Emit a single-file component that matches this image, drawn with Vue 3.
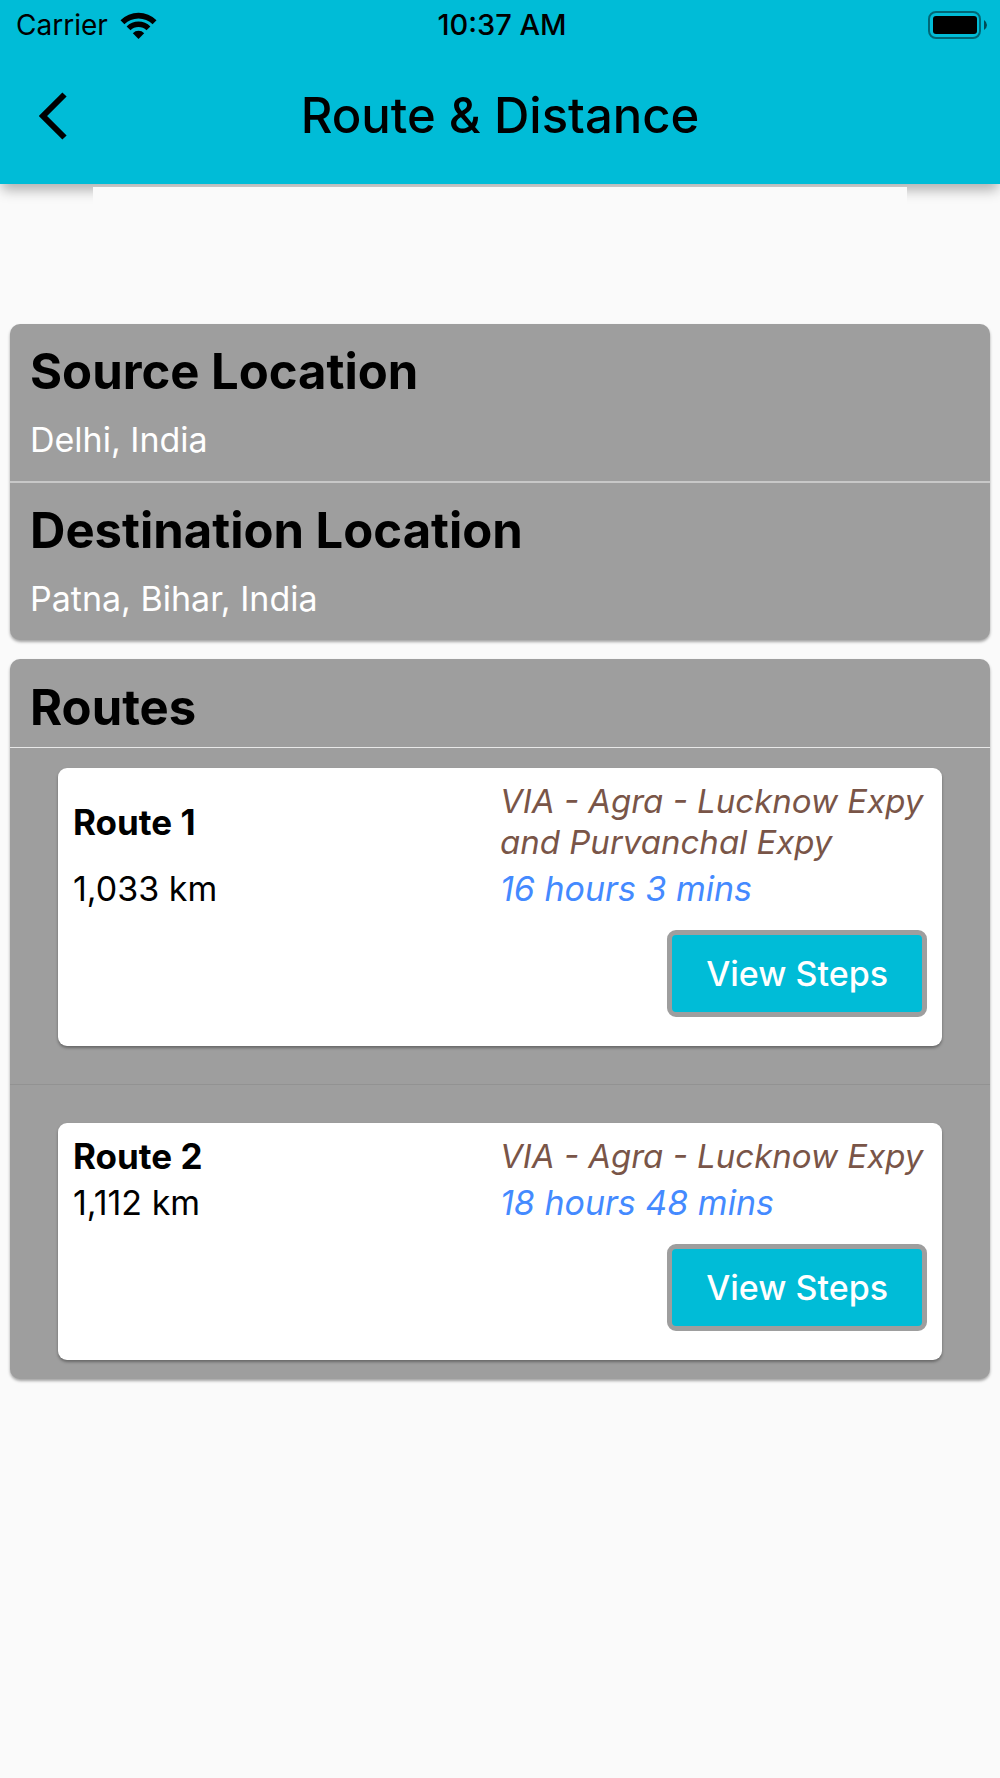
<template>
  <div class="screen">
    <header class="header">
      <div class="status-bar">
        <div class="carrier">
          <span>Carrier</span>
          <svg class="wifi" viewBox="0 0 37 27" aria-hidden="true">
            <path d="M0.5 8.3 A25.5 25.5 0 0 1 36.5 8.3 L32.6 12.2 A20 20 0 0 0 4.4 12.2 Z" />
            <path d="M6.6 14.4 A16.8 16.8 0 0 1 30.4 14.4 L26.5 18.3 A11.3 11.3 0 0 0 10.5 18.3 Z" />
            <path d="M12.8 21.2 A8.1 8.1 0 0 1 24.2 21.2 L18.5 27 Z" />
          </svg>
        </div>
        <span class="time">10:37 AM</span>
        <svg class="battery" viewBox="0 0 60 28" aria-hidden="true">
          <rect x="1" y="1" width="51" height="26" rx="7" fill="none" stroke="#000" stroke-opacity="0.45" stroke-width="2" />
          <rect x="5" y="5" width="44" height="18" rx="3" />
          <path d="M56 9 Q59 11 59 14 Q59 17 56 19 Z" fill-opacity="0.6" />
        </svg>
      </div>
      <div class="app-bar">
        <button class="back" type="button" aria-label="Back">
          <svg viewBox="0 0 28 48" aria-hidden="true">
            <path d="M25.5 2.5 L4 24 L25.5 45.5" fill="none" stroke="#000" stroke-width="6" />
          </svg>
        </button>
        <h1>Route &amp; Distance</h1>
      </div>
    </header>

    <main class="content">
      <div class="placeholder"></div>

      <section class="card">
        <div v-for="place in places" :key="place.label" class="place">
          <h2>{{ place.label }}</h2>
          <p>{{ place.name }}</p>
        </div>
      </section>

      <section class="card">
        <h2 class="routes-title">Routes</h2>
        <div v-for="route in routes" :key="route.title" class="route-row">
          <article class="route">
            <div class="route-info">
              <h3>{{ route.title }}</h3>
              <p class="via">VIA - {{ route.via }}</p>
              <p>{{ route.distance }}</p>
              <p class="duration">{{ route.duration }}</p>
            </div>
            <button class="steps" type="button">View Steps</button>
          </article>
        </div>
      </section>
    </main>
  </div>
</template>

<script setup>
const places = [
  { label: 'Source Location', name: 'Delhi, India' },
  { label: 'Destination Location', name: 'Patna, Bihar, India' }
]

const routes = [
  {
    title: 'Route 1',
    via: 'Agra - Lucknow Expy and Purvanchal Expy',
    distance: '1,033 km',
    duration: '16 hours 3 mins'
  },
  {
    title: 'Route 2',
    via: 'Agra - Lucknow Expy',
    distance: '1,112 km',
    duration: '18 hours 48 mins'
  }
]
</script>

<style>
body {
  margin: 0;
  background: #fafafa;
}
</style>

<style scoped>
.screen {
  font-family: Inter, Roboto, sans-serif;
  font-size: 34px;
  line-height: 41px;
  color: #000;
}

h1,
h2,
h3,
p {
  margin: 0;
}

h1,
h2 {
  font-size: 49px;
  line-height: 56px;
}

h1 {
  font-weight: 450;
}

h2 {
  font-weight: 650;
}

h3 {
  font-size: 35px;
  font-weight: 650;
}

.header {
  background: #00bcd7;
  box-shadow: 0 8px 12px -2px rgba(0, 0, 0, 0.3);
}

.status-bar {
  display: grid;
  grid-template-columns: 1fr auto 1fr;
  align-items: center;
  padding: 8px 12px 6px 16px;
  font-size: 28px;
  line-height: 34px;
}

.carrier {
  display: flex;
  align-items: center;
  gap: 12px;
}

.wifi {
  width: 37px;
  height: 27px;
}

.time {
  font-size: 29px;
  font-weight: 550;
}

.battery {
  justify-self: end;
  width: 60px;
  height: 28px;
}

.app-bar {
  display: grid;
  grid-template-columns: 80px 1fr 80px;
  align-items: center;
  height: 136px;
  text-align: center;
}

.back {
  display: flex;
  padding: 0 0 0 39px;
  border: 0;
  background: none;
  cursor: pointer;
}

.back svg {
  width: 28px;
  height: 48px;
}

.content {
  padding: 3px 10px 0;
}

.placeholder {
  width: 83%;
  height: 137px;
  margin: 0 auto;
  background: #fafafa;
}

.card {
  margin-bottom: 19px;
  border-radius: 10px;
  background: #9e9e9e;
  box-shadow: 0 2px 3px rgba(0, 0, 0, 0.35);
}

.place {
  padding: 20px 20px 21px;
}

.place + .place {
  border-top: 2px solid #c8c8c8;
}

.place p {
  margin-top: 19px;
  color: #fff;
}

.routes-title {
  padding: 21px 20px 11px;
  border-bottom: 1px solid #e8e8e8;
}

.route-row {
  padding: 20px 48px 38px;
}

.route-row + .route-row {
  padding: 38px 48px 19px;
  border-top: 1px solid #929292;
}

.route {
  display: flex;
  flex-direction: column;
  gap: 21px;
  padding: 13px 15px 29px;
  border-radius: 9px;
  background: #fff;
  box-shadow: 0 2px 3px rgba(0, 0, 0, 0.35);
}

.route-info {
  display: grid;
  grid-template-columns: 1fr 1fr;
  row-gap: 5px;
  align-items: center;
}

.via,
.duration {
  font-style: italic;
}

.via {
  font-size: 33px;
  color: #795548;
}

.duration {
  color: #448aff;
}

.steps {
  align-self: flex-end;
  padding: 18px 34px;
  border: 5px solid #9e9e9e;
  border-radius: 9px;
  background: #00bcd7;
  color: #fff;
  font: inherit;
  font-weight: 550;
  cursor: pointer;
}
</style>
